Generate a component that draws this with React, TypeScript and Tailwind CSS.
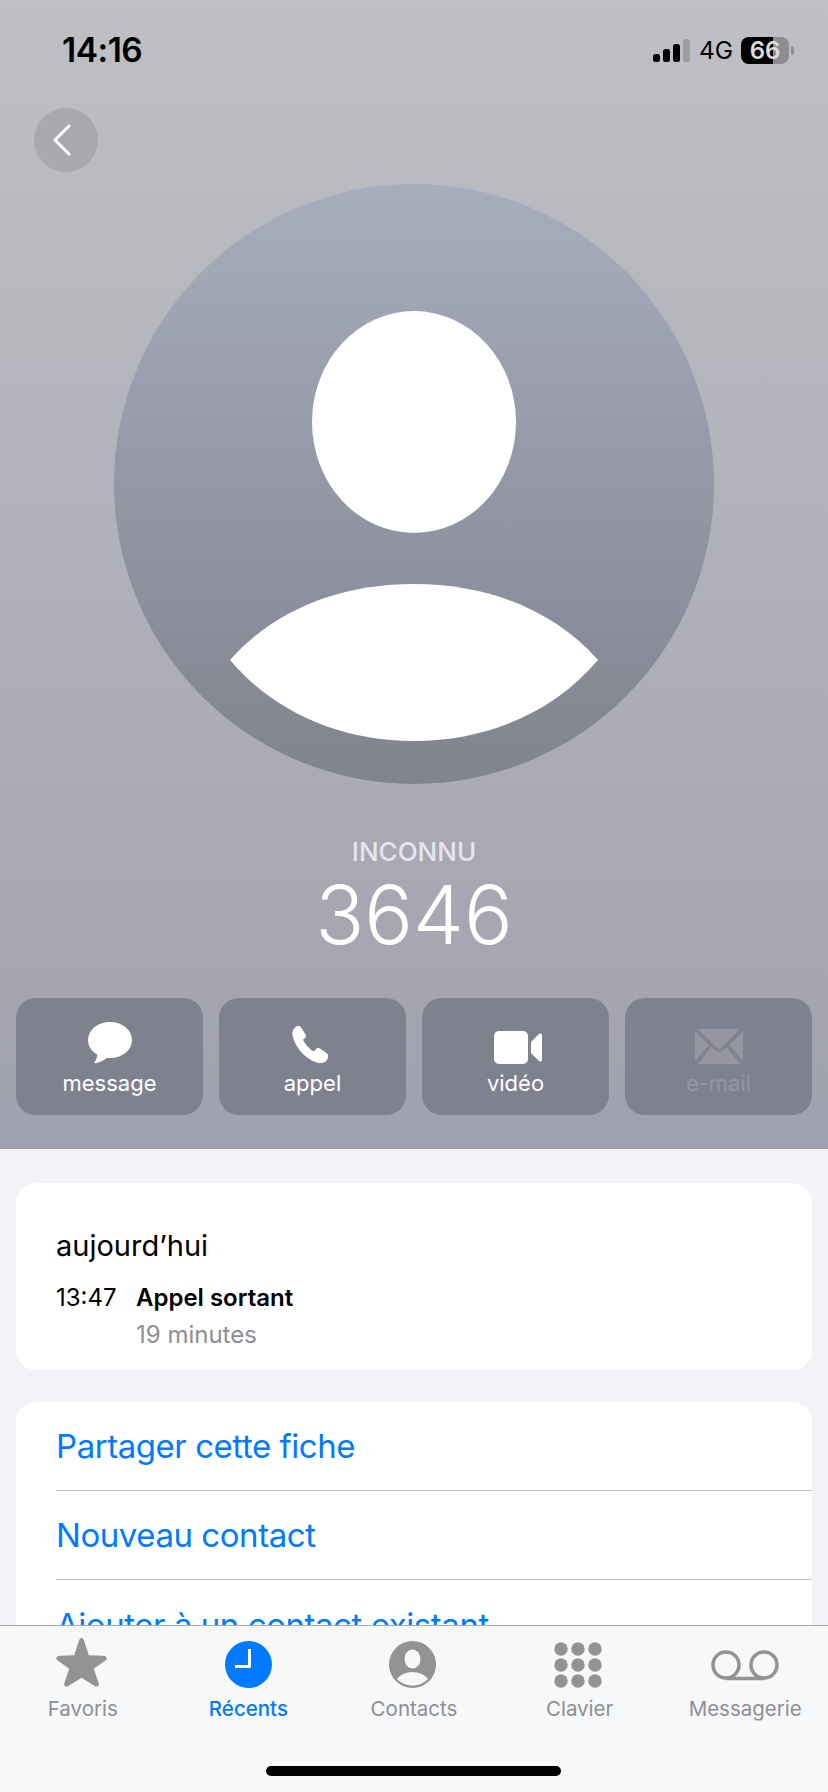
import type { ReactNode } from "react";

const font = "font-['Inter','Liberation_Sans',sans-serif]";

function StatusBar() {
  return (
    <div className="h-[100px] flex justify-between pl-[62px] pr-[34px] pt-[30px]">
      <div className="text-[33.5px] leading-[40px] font-semibold tracking-[-0.5px] text-black">14:16</div>
      <div className="flex items-center h-[40px] gap-[9px]">
        <svg width="37" height="23" viewBox="0 0 37 23">
          <rect x="0" y="15" width="7" height="8" rx="2.5" fill="#000" />
          <rect x="10" y="10" width="7" height="13" rx="2.5" fill="#000" />
          <rect x="20" y="5" width="7" height="18" rx="2.5" fill="#000" />
          <rect x="30" y="0" width="7" height="23" rx="2.5" fill="#9d9ea2" />
        </svg>
        <div className="text-[24.5px] leading-[30px] font-normal text-black w-[33px]">4G</div>
        <div className="flex items-center gap-[2px]">
          <div className="relative w-[48px] h-[27px] rounded-[8px] bg-[#8d8d90]">
            <div className="absolute left-0 top-0 bottom-0 w-[32px] rounded-l-[8px] bg-black" />
            <div className="relative text-center text-[24px] leading-[27px] font-semibold text-[#dcdcdf]">66</div>
          </div>
          <div className="w-[3px] h-[9px] rounded-r-full bg-[#8d8d90]" />
        </div>
      </div>
    </div>
  );
}

function Avatar() {
  return (
    <div className="w-[600px] h-[600px] rounded-full mx-auto bg-gradient-to-b from-[#a7adbd] to-[#81838e] overflow-hidden">
      <svg width="600" height="600" viewBox="0 0 600 600">
        <ellipse cx="300" cy="238" rx="102" ry="111" fill="#fff" />
        <path d="M116 476 C160 426 226 400 300 400 C374 400 440 426 484 476 C440 528 374 557 300 557 C226 557 160 528 116 476 Z" fill="#fff" />
      </svg>
    </div>
  );
}

function ActionButton({ icon, label, muted }: { icon: ReactNode; label: string; muted?: boolean }) {
  return (
    <div className="flex-1 h-[117px] rounded-[20px] bg-[#80818f] flex flex-col items-center">
      <div className="h-[66px] w-full flex items-end justify-center">{icon}</div>
      <div className={`text-[22px] leading-[26px] mt-[6px] ${muted ? "text-[#9596a2]" : "text-white"}`}>{label}</div>
    </div>
  );
}

function Header() {
  return (
    <div className="h-[1149px] bg-gradient-to-b from-[#bfc0c4] to-[#a0a1ae] border-b border-[#9a9ba6]">
      <StatusBar />
      <div className="h-[84px] pl-[34px] pt-[8px]">
        <div className="w-[64px] h-[64px] rounded-full bg-[#a8a9ad] flex items-center justify-center">
          <svg width="22" height="32" viewBox="0 0 22 32" fill="none" className="-ml-[8px]">
            <path d="M18 2 L4 16 L18 30" stroke="#fff" strokeWidth="3" strokeLinecap="round" strokeLinejoin="round" />
          </svg>
        </div>
      </div>
      <Avatar />
      <div className="mt-[53px] text-center text-[26px] leading-[30px] font-medium text-[#e6e6ea]">INCONNU</div>
      <div className="mt-[3px] text-center text-[81px] leading-[90px] font-light text-white">3646</div>
      <div className="flex gap-[16px] px-[16px] mt-[38px]">
        <ActionButton
          label="message"
          icon={
            <svg width="44" height="42" viewBox="0 0 44 42">
              <ellipse cx="22" cy="18" rx="22" ry="18" fill="#fff" />
              <path d="M9 30 C9.500 35 8.500 38 6.500 40 C6 41 7 41.500 8.500 41 C13 40 17 38 20 35 Z" fill="#fff" />
            </svg>
          }
        />
        <ActionButton
          label="appel"
          icon={
            <svg width="37" height="38" viewBox="0 0 37 38" className="-ml-[4px]">
              <path d="M3 1.500 C5 -0.500 8 -0.500 9.500 2 L13.500 8.500 C14.500 10 14 11.500 12.500 12.500 L11 13.500 C13 18 17 23 22 25.500 L23.500 23.500 C24.500 22 26.500 21.500 28 22.500 L34.500 27 C36.500 28.500 36.500 31 35.500 33 C34 36 31 37.500 27 37 C14 34.500 2 20 0.500 9 C0 6 1 3.500 3 1.500 Z" fill="#fff" />
            </svg>
          }
        />
        <ActionButton
          label="vidéo"
          icon={
            <svg width="48" height="33" viewBox="0 0 48 33" className="ml-[5px]">
              <rect x="0" y="0" width="34" height="33" rx="5" fill="#fff" />
              <path d="M37 11 L45 3 C46 2 48 2.500 48 4 L48 29 C48 30.500 46 31 45 30 L37 22 Z" fill="#fff" />
            </svg>
          }
        />
        <ActionButton
          label="e-mail"
          muted
          icon={
            <svg width="48" height="35" viewBox="0 0 48 35">
              <path d="M3 0 H45 L26 19 C25 20 23 20 22 19 Z" fill="#9596a2" />
              <path d="M0 2 L14 16 L0 32 Z" fill="#9596a2" />
              <path d="M48 2 L34 16 L48 32 Z" fill="#9596a2" />
              <path d="M3 35 L16 18 L21 22 C23 23 25 23 27 22 L32 18 L45 35 Z" fill="#9596a2" />
            </svg>
          }
        />
      </div>
    </div>
  );
}

function LinkRow({ text, last }: { text: string; last?: boolean }) {
  return (
    <div className={`h-[89px] flex items-center text-[33px] leading-[40px] tracking-[-0.45px] text-[#007aff] ${last ? "" : "border-b border-[#c1c1c4]"}`}>
      {text}
    </div>
  );
}

function Body() {
  return (
    <div className="px-[16px] pt-[34px] flex flex-col gap-[32px]">
      <div className="h-[187px] rounded-[20px] bg-white pl-[40px] pt-[45px]">
        <div className="text-[29px] leading-[36px] text-black">aujourd’hui</div>
        <div className="flex mt-[16px]">
          <div className="w-[80px] text-[24px] leading-[36px] text-black">13:47</div>
          <div>
            <div className="text-[24px] leading-[36px] font-semibold text-black">Appel sortant</div>
            <div className="text-[24px] leading-[36px] mt-[1px] text-[#8e8e93]">19 minutes</div>
          </div>
        </div>
      </div>
      <div className="rounded-t-[20px] bg-white pl-[40px]">
        <LinkRow text="Partager cette fiche" />
        <LinkRow text="Nouveau contact" />
        <LinkRow text="Ajouter à un contact existant" last />
      </div>
    </div>
  );
}

function TabItem({ icon, label, active }: { icon: ReactNode; label: string; active?: boolean }) {
  return (
    <div className="flex flex-col items-center">
      <div className="h-[62px] flex items-end justify-center">{icon}</div>
      <div className={`text-[20.5px] leading-[26px] mt-[8px] ${active ? "text-[#007aff] font-medium" : "text-[#8e8e93]"}`}>{label}</div>
    </div>
  );
}

function TabBar() {
  const gray = "#939396";
  return (
    <div className="absolute left-0 right-0 bottom-0 h-[167px] bg-[#f7f8fa] border-t border-[#a9a9ac]">
      <div className="grid grid-cols-5">
        <TabItem
          label="Favoris"
          icon={
            <svg width="51" height="49" viewBox="0 0 52 50" className="mb-[1px] -ml-[2px]">
              <path d="M26 0 C27.500 0 28.500 2 29 4 L33.500 17.500 L48 18 C51 18 53 20 51 22.500 L38.500 31.500 L43.500 46 C44.500 49 42 50.500 39.500 49 L26 40.500 L12.500 49 C10 50.500 7.500 49 8.500 46 L13.500 31.500 L1 22.500 C-1 20 1 18 4 18 L18.500 17.500 L23 4 C23.500 2 24.500 0 26 0 Z" fill={gray} />
            </svg>
          }
        />
        <TabItem
          active
          label="Récents"
          icon={
            <svg width="47" height="47" viewBox="0 0 47 47">
              <circle cx="23.500" cy="23.500" r="23.500" fill="#007aff" />
              <path d="M24.500 8 V25.500 H10" fill="none" stroke="#fff" strokeWidth="3" strokeLinejoin="round" />
            </svg>
          }
        />
        <TabItem
          label="Contacts"
          icon={
            <svg width="47" height="47" viewBox="0 0 47 47" className="-ml-[2px]">
              <circle cx="23.500" cy="23.500" r="23.500" fill={gray} />
              <ellipse cx="23.500" cy="18" rx="8" ry="9.500" fill="#f7f8fa" />
              <path d="M8 38 C11 34 17 31 23.500 31 C30 31 36 34 39 38 C35 42 29.500 44.500 23.500 44.500 C17.500 44.500 12 42 8 38 Z" fill="#f7f8fa" />
            </svg>
          }
        />
        <TabItem
          label="Clavier"
          icon={
            <svg width="48" height="46" viewBox="0 0 48 46" className="-ml-[3px]">
              {[7, 24, 41].map((cx) =>
                [7, 23, 39].map((cy) => <circle key={`${cx}-${cy}`} cx={cx} cy={cy} r="6.700" fill={gray} />)
              )}
            </svg>
          }
        />
        <TabItem
          label="Messagerie"
          icon={
            <svg width="68" height="31" viewBox="0 0 68 31" className="mb-[7px]">
              <circle cx="15" cy="15" r="13" fill="none" stroke={gray} strokeWidth="3.500" />
              <circle cx="53" cy="15" r="13" fill="none" stroke={gray} strokeWidth="3.500" />
              <path d="M15 28.500 H53" stroke={gray} strokeWidth="3.500" />
            </svg>
          }
        />
      </div>
      <div className="absolute left-[266px] bottom-[16px] w-[295px] h-[10px] rounded-full bg-black" />
    </div>
  );
}

export default function App() {
  return (
    <div className={`relative w-[828px] h-[1792px] overflow-hidden bg-[#f2f2f7] ${font}`}>
      <Header />
      <Body />
      <TabBar />
    </div>
  );
}
